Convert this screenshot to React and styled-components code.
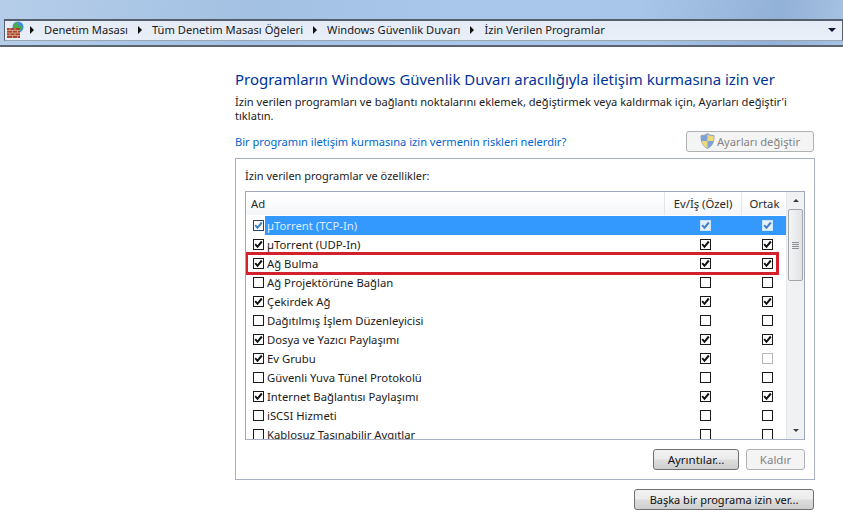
import React from 'react'
import styled, { createGlobalStyle } from 'styled-components'

const programs = [
  { name: 'µTorrent (TCP-In)', on: true, home: true, pub: true, selected: true },
  { name: 'µTorrent (UDP-In)', on: true, home: true, pub: true },
  { name: 'Ağ Bulma', on: true, home: true, pub: true },
  { name: 'Ağ Projektörüne Bağlan' },
  { name: 'Çekirdek Ağ', on: true, home: true, pub: true },
  { name: 'Dağıtılmış İşlem Düzenleyicisi' },
  { name: 'Dosya ve Yazıcı Paylaşımı', on: true, home: true, pub: true },
  { name: 'Ev Grubu', on: true, home: true, pubDisabled: true },
  { name: 'Güvenli Yuva Tünel Protokolü' },
  { name: 'Internet Bağlantısı Paylaşımı', on: true, home: true, pub: true },
  { name: 'iSCSI Hizmeti' },
  { name: 'Kablosuz Taşınabilir Aygıtlar' }
]

const crumbs = ['Denetim Masası', 'Tüm Denetim Masası Öğeleri', 'Windows Güvenlik Duvarı', 'İzin Verilen Programlar']

const GlobalStyle = createGlobalStyle`
  html, body {
    margin: 0;
    padding: 0;
    background: #fff;
  }
  body {
    font-family: 'Noto Sans', 'Open Sans', sans-serif;
    font-size: 11.3px;
    color: #1c1c1c;
  }
`

const Page = styled.div`
  width: 843px;
  height: 530px;
  overflow: hidden;
  background: #fff;
`

const TopBar = styled.div`
  height: 26px;
  padding: 19px 0 0 4px;
  background: linear-gradient(100deg, #b5cde9 0%, #a3c1e3 30%, #a9c7ea 55%, #a8c6e9 75%, #92b1d6 92%, #a6c2e3 100%);
  border-bottom: 2px solid #5c6470;
`

const AddressBox = styled.div`
  height: 17px;
  display: flex;
  align-items: center;
  gap: 7px;
  padding: 0 6px 2px 2px;
  border: 1px solid #56606c;
  border-bottom-color: #9aa5b2;
  border-top-width: 2px;
  background: linear-gradient(#e4ebf6, #e9eff8);
  font-size: 11.15px;
  color: #1a1a1a;
`

const IconSlot = styled.span`
  display: flex;
  margin-right: -5px;
`

const Crumb = styled.span`
  white-space: nowrap;
`

const Arrow = styled.span`
  width: 0;
  height: 0;
  margin: 0 3px 0 3px;
  border-left: 4px solid #111;
  border-top: 4px solid transparent;
  border-bottom: 4px solid transparent;
`

const DropArrow = styled.span`
  width: 0;
  height: 0;
  margin-left: auto;
  border-top: 4px solid #10103a;
  border-left: 4px solid transparent;
  border-right: 4px solid transparent;
`

const Main = styled.div`
  width: 580px;
  margin-left: 235px;
  padding-top: 22px;
`

const Title = styled.h1`
  margin: 0;
  font-size: 14.95px;
  line-height: 20px;
  font-weight: 400;
  color: #003399;
  white-space: nowrap;
`

const Intro = styled.p`
  margin: 6px 0 0;
  font-size: 11.1px;
  line-height: 14px;
  width: 570px;
`

const LinkRow = styled.div`
  display: flex;
  align-items: center;
  justify-content: space-between;
  margin-top: 7px;
  padding-right: 1px;
  height: 22px;
`

const HelpLink = styled.a`
  color: #0066cc;
  font-size: 11.1px;
`

const Button = styled.button`
  height: 21px;
  width: ${p => p.$w}px;
  padding: 0;
  display: flex;
  align-items: center;
  justify-content: center;
  gap: 2px;
  font: inherit;
  font-size: ${p => p.$size || 11.5}px;
  border-radius: 3px;
  border: 1px solid ${p => (p.disabled ? '#adb2b5' : '#707070')};
  color: ${p => (p.disabled ? '#838383' : '#111')};
  background: ${p =>
    p.disabled
      ? '#f4f4f4'
      : 'linear-gradient(#f2f2f2 0%, #ebebeb 48%, #dddddd 52%, #cfcfcf 100%)'};
`

const Panel = styled.div`
  margin-top: 6px;
  height: 322px;
  box-sizing: border-box;
  border: 1px solid #a9b0c6;
  padding: 9px 9px 0 9px;
`

const PanelLabel = styled.div`
  height: 15px;
  line-height: 15px;
  font-size: 11px;
`

const List = styled.div`
  margin-top: 8px;
  height: 247px;
  border: 1px solid #9fa6bd;
  border-bottom-color: #a9b0c6;
  display: flex;
  overflow: hidden;
  position: relative;
`

const ListBody = styled.div`
  flex: 1;
  min-width: 0;
`

const HeaderRow = styled.div`
  height: 23px;
  margin-bottom: 1px;
  display: grid;
  grid-template-columns: 419px 77px 46px;
  background: linear-gradient(#ffffff 0%, #fbfcfd 50%, #f3f5f7 100%);
`

const HeaderCell = styled.div`
  display: flex;
  align-items: center;
  justify-content: ${p => (p.$left ? 'flex-start' : 'center')};
  padding-left: ${p => (p.$left ? 5 : 0)}px;
  border-right: 1px solid #e3e6eb;
  font-size: 11.3px;
  color: #2a2a2a;
`

const Row = styled.div`
  height: 19px;
  display: grid;
  grid-template-columns: 419px 77px 46px;
  align-items: center;
`

const NameCell = styled.div`
  display: flex;
  align-items: center;
  height: 19px;
  padding-left: 7px;
`

const Name = styled.span`
  flex: 1;
  height: 19px;
  line-height: 20px;
  margin-left: 1px;
  padding-left: 2px;
  white-space: nowrap;
  color: ${p => (p.$selected ? '#dcecff' : '#1c1c1c')};
  background: ${p => (p.$selected ? '#3399ff' : 'transparent')};
`

const TickCell = styled.div`
  display: flex;
  justify-content: center;
  align-items: center;
  height: 19px;
  padding-left: 4px;
  background: ${p => (p.$selected ? '#3399ff' : 'transparent')};
`

const Box = styled.span`
  width: 9px;
  height: 9px;
  flex: none;
  display: flex;
  align-items: center;
  justify-content: center;
  background: ${p => (p.$tone === 'light' ? '#e4f0fc' : '#fff')};
  border: 1px solid ${p =>
    p.$disabled ? '#b8b8b8' : p.$tone === 'light' ? '#cfe3f7' : p.$tone === 'navy' ? '#24486c' : '#1a1a1a'};
`

const ScrollBar = styled.div`
  width: 17px;
  flex: none;
  display: flex;
  flex-direction: column;
  background: #f0f1f3;
  border-left: 1px solid #e6e8ec;
`

const ScrollButton = styled.div`
  height: 17px;
  display: flex;
  align-items: center;
  justify-content: center;
`

const ScrollArrow = styled.span`
  width: 0;
  height: 0;
  border-left: 3.5px solid transparent;
  border-right: 3.5px solid transparent;
  ${p => (p.$down ? 'border-top: 3px solid #3b3b3b;' : 'border-bottom: 3px solid #3b3b3b;')}
`

const Thumb = styled.div`
  height: 70px;
  margin: 0 1px;
  border: 1px solid #a2a6ab;
  border-radius: 2px;
  background: linear-gradient(90deg, #f3f4f5, #e2e3e5);
  display: flex;
  flex-direction: column;
  align-items: center;
  justify-content: center;
  gap: 1px;
`

const Grip = styled.span`
  width: 7px;
  height: 1px;
  background: #8c8f93;
`

const ScrollGap = styled.div`
  flex: 1;
`

const Marker = styled.div`
  position: absolute;
  left: -1px;
  top: 60px;
  width: 534px;
  height: 23px;
  box-sizing: border-box;
  border: 3px solid #d2202c;
  pointer-events: none;
`

const PanelButtons = styled.div`
  display: flex;
  justify-content: flex-end;
  gap: 7px;
  margin-top: 9px;
`

const BottomRow = styled.div`
  display: flex;
  justify-content: flex-end;
  margin-top: 9px;
  padding-right: 1px;
`

const WallIcon = () => (
  <IconSlot>
    <svg width="18" height="18" viewBox="0 0 18 18">
      <circle cx="11" cy="6" r="5.5" fill="#3f8fd8" />
      <path d="M8 2 C10 1 12 2 11 4 C10 5 12 6 13 5 C15 4 16 6 15 8 C13 9 11 8 10 9 L7 8 C6 6 7 4 8 2Z" fill="#4eae3d" />
      <rect x="0" y="7" width="13" height="10" fill="#a8452c" />
      <path d="M0 9.5H13M0 12H13M0 14.5H13M3 7V9.5M8 7V9.5M5.5 9.5V12M10.5 9.5V12M3 12V14.5M8 12V14.5M5.5 14.5V17M10.5 14.5V17" stroke="#e2b9a2" strokeWidth="0.7" fill="none" />
    </svg>
  </IconSlot>
)

const ShieldIcon = () => (
  <svg width="15" height="16" viewBox="0 0 15 16">
    <path d="M7.5 0.5 C9.5 2 11.5 2.5 14 2.5 C14.5 8 12.5 13 7.5 15.5 C2.5 13 0.5 8 1 2.5 C3.5 2.5 5.5 2 7.5 0.5Z" fill="#8fb3dc" stroke="#7d93ad" strokeWidth="0.7" />
    <path d="M7.5 1.5 V8 H1.6 C1.3 6 1.3 4.5 1.5 3 C3.5 3 5.7 2.6 7.5 1.5Z" fill="#7aa2d6" />
    <path d="M7.5 8 H13.4 C12.8 11 11 13.4 7.5 15 Z" fill="#7aa2d6" />
    <path d="M7.5 1.5 C9.3 2.6 11.5 3 13.5 3 C13.7 4.5 13.7 6 13.4 8 H7.5Z" fill="#f0d77a" />
    <path d="M7.5 8 V15 C4 13.4 2.2 11 1.6 8Z" fill="#f0d77a" />
  </svg>
)

const Check = ({ checked, disabled, tone }) => (
  <Box $disabled={disabled} $tone={tone}>
    {checked && (
      <svg width="9" height="9" viewBox="0 0 9 9">
        <path
          d="M1.2 4.2 L3.5 6.8 L7.8 1.5"
          fill="none"
          stroke={tone ? '#3f7fc4' : '#111'}
          strokeWidth="2"
        />
      </svg>
    )}
  </Box>
)

export default function App() {
  return (
    <Page>
      <GlobalStyle />
      <TopBar>
        <AddressBox>
          <WallIcon />
          {crumbs.map(c => (
            <React.Fragment key={c}>
              <Arrow />
              <Crumb>{c}</Crumb>
            </React.Fragment>
          ))}
          <DropArrow />
        </AddressBox>
      </TopBar>
      <Main>
        <Title>Programların Windows Güvenlik Duvarı aracılığıyla iletişim kurmasına izin ver</Title>
        <Intro>
          İzin verilen programları ve bağlantı noktalarını eklemek, değiştirmek veya kaldırmak için, Ayarları değiştir'i tıklatın.
        </Intro>
        <LinkRow>
          <HelpLink>Bir programın iletişim kurmasına izin vermenin riskleri nelerdir?</HelpLink>
          <Button disabled $w={128} $size={11.2}>
            <ShieldIcon />
            Ayarları değiştir
          </Button>
        </LinkRow>
        <Panel>
          <PanelLabel>İzin verilen programlar ve özellikler:</PanelLabel>
          <List>
            <ListBody>
              <HeaderRow>
                <HeaderCell $left>Ad</HeaderCell>
                <HeaderCell>Ev/İş (Özel)</HeaderCell>
                <HeaderCell>Ortak</HeaderCell>
              </HeaderRow>
              {programs.map(p => (
                <Row key={p.name}>
                  <NameCell>
                    <Check checked={p.on} tone={p.selected && 'navy'} />
                    <Name $selected={p.selected}>{p.name}</Name>
                  </NameCell>
                  <TickCell $selected={p.selected}>
                    <Check checked={p.home} tone={p.selected && 'light'} />
                  </TickCell>
                  <TickCell $selected={p.selected}>
                    <Check checked={p.pub} disabled={p.pubDisabled} tone={p.selected && 'light'} />
                  </TickCell>
                </Row>
              ))}
            </ListBody>
            <ScrollBar>
              <ScrollButton>
                <ScrollArrow />
              </ScrollButton>
              <Thumb>
                <Grip />
                <Grip />
                <Grip />
                <Grip />
              </Thumb>
              <ScrollGap />
              <ScrollButton>
                <ScrollArrow $down />
              </ScrollButton>
            </ScrollBar>
            <Marker />
          </List>
          <PanelButtons>
            <Button $w={86}>Ayrıntılar...</Button>
            <Button disabled $w={59}>Kaldır</Button>
          </PanelButtons>
        </Panel>
        <BottomRow>
          <Button $w={180} $size={11}>Başka bir programa izin ver...</Button>
        </BottomRow>
      </Main>
    </Page>
  )
}
